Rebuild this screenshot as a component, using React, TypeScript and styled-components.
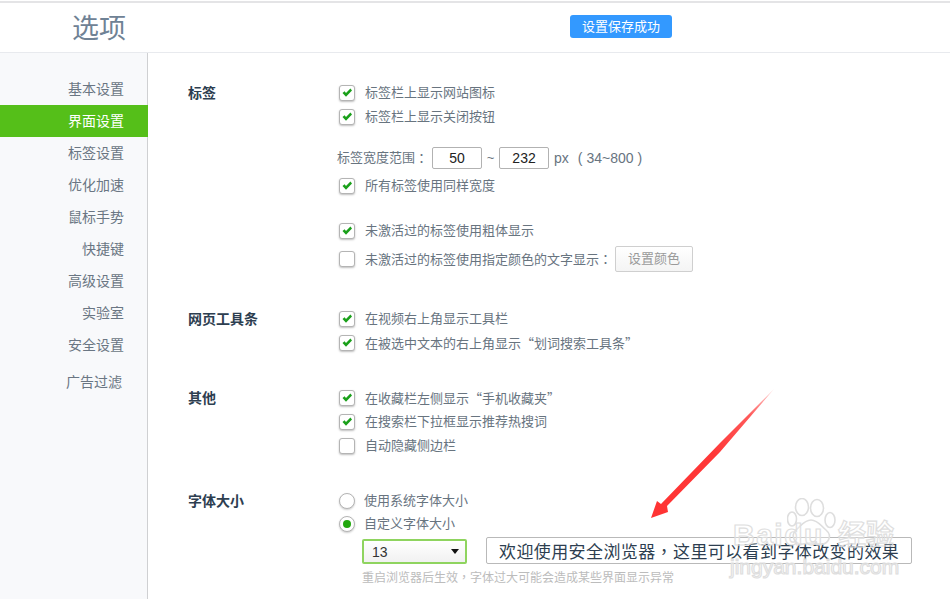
import styled, { createGlobalStyle } from 'styled-components'

const sideItems = ['基本设置', '界面设置', '标签设置', '优化加速', '鼠标手势', '快捷键', '高级设置', '实验室', '安全设置']

const Global = createGlobalStyle`
	html, body {
		margin: 0;
		padding: 0;
		background: #fff;
	}
	body {
		font-family: "Liberation Sans", "Noto Sans CJK SC", sans-serif;
		font-size: 13px;
		color: #68747f;
	}
`

const Page = styled.div`
	position: relative;
	width: 950px;
	height: 599px;
	overflow: hidden;
	padding-top: 1px;
	box-sizing: border-box;
	display: flex;
	flex-direction: column;
`

const Header = styled.header`
	height: 49px;
	flex: none;
	border-top: 2px solid #e4e4e6;
	border-bottom: 1px solid #e8eaee;
	padding-left: 72px;
	display: flex;
	align-items: center;
`

const Title = styled.h1`
	margin: 2px 0 0;
	font-size: 27px;
	font-weight: 400;
	line-height: 50px;
	color: #6f8295;
`

const Toast = styled.div`
	position: absolute;
	left: 570px;
	top: 15px;
	width: 102px;
	height: 23px;
	border-radius: 3px;
	background: #3399ff;
	color: #fff;
	font-size: 13px;
	line-height: 23px;
	text-align: center;
`

const Body = styled.div`
	flex: 1;
	display: flex;
	min-height: 0;
`

const Sidebar = styled.nav`
	flex: none;
	box-sizing: border-box;
	width: 148px;
	padding-top: 20px;
	background: #f8f9fb;
	border-right: 1px solid #cfd0d2;
`

const SideItem = styled.div<{ $active?: boolean }>`
	height: 32px;
	margin-right: -1px;
	padding-right: 24px;
	line-height: 32px;
	text-align: right;
	font-size: 14px;
	color: ${({ $active }) => ($active ? '#fff' : '#6a7683')};
	background: ${({ $active }) => ($active ? '#55bf19' : 'transparent')};
`

const AdItem = styled(SideItem)`
	margin-top: 5px;
	padding-right: 26px;
`

const Main = styled.main`
	flex: 1;
	padding: 28px 0 0 40px;
`

const Section = styled.section<{ $gap?: number }>`
	display: flex;
	margin-top: ${({ $gap }) => $gap ?? 0}px;
`

const SectionLabel = styled.div`
	width: 150px;
	flex: none;
	font-size: 14px;
	font-weight: 700;
	line-height: 24px;
	color: #2d3e50;
`

const Options = styled.div`
	flex: 1;
	display: flex;
	flex-direction: column;
`

const Row = styled.div<{ $top?: number }>`
	display: flex;
	align-items: center;
	height: 24px;
	margin-top: ${({ $top }) => $top ?? 0}px;
	padding-left: 1px;
	line-height: 24px;
`

const Check = styled.span<{ $on?: boolean }>`
	width: 16px;
	height: 16px;
	flex: none;
	box-sizing: border-box;
	margin-right: 10px;
	border: 1px solid #b4b4b4;
	border-radius: 3px;
	background: #fff;
	box-shadow: 0 1px 2px rgba(0, 0, 0, 0.25);
	display: flex;
	align-items: center;
	justify-content: center;
	svg {
		display: ${({ $on }) => ($on ? 'block' : 'none')};
	}
`

const Radio = styled.span<{ $on?: boolean }>`
	width: 16px;
	height: 16px;
	flex: none;
	box-sizing: border-box;
	margin-right: 9px;
	border: 1px solid #b4b4b4;
	border-radius: 50%;
	background: #fff;
	box-shadow: 0 1px 2px rgba(0, 0, 0, 0.2);
	display: flex;
	align-items: center;
	justify-content: center;
	&::after {
		content: '';
		width: 8px;
		height: 8px;
		border-radius: 50%;
		background: ${({ $on }) => ($on ? '#22a80e' : 'transparent')};
	}
`

const RangeRow = styled(Row)`
	padding-left: 0;
	margin-left: -1px;
`

const NumBox = styled.span`
	width: 50px;
	height: 22px;
	box-sizing: border-box;
	border: 1px solid #b2b2b2;
	border-radius: 2px;
	text-align: center;
	font-size: 14px;
	line-height: 20px;
	color: #222;
`

const FirstNum = styled(NumBox)`
	margin-left: 4px;
`

const Tilde = styled.span`
	width: 17px;
	text-align: center;
`

const Unit = styled.span`
	margin-left: 5px;
	font-size: 14px;
`

const Limits = styled.span`
	margin-left: 9px;
	font-size: 14px;
	white-space: pre;
`

// centred full-width punctuation, as the TC cut draws it
const Punct = styled.span`
	font-family: "Noto Sans CJK TC", sans-serif;
`

// the SC cut keeps curly quotes at full width
const Quote = styled.span`
	font-family: "Noto Sans CJK SC", sans-serif;
`

const ColorButton = styled.span`
	width: 78px;
	height: 26px;
	box-sizing: border-box;
	margin-left: 3px;
	border: 1px solid #cfcfcf;
	border-radius: 2px;
	background: linear-gradient(#fff, #f4f4f4);
	text-align: center;
	font-size: 13px;
	line-height: 24px;
	color: #9a9a9a;
`

const PreviewRow = styled.div`
	display: flex;
	align-items: flex-end;
	height: 27px;
	margin: 1px 0 0 24px;
`

const SelectBox = styled.div`
	width: 105px;
	height: 25px;
	box-sizing: border-box;
	padding: 0 6px 0 8px;
	border: 2px solid #8fd45f;
	border-radius: 2px;
	background: linear-gradient(#fff, #f1f1f1);
	display: flex;
	align-items: center;
	justify-content: space-between;
	font-size: 14px;
	color: #333;
`

const Caret = styled.span`
	border-left: 4.5px solid transparent;
	border-right: 4.5px solid transparent;
	border-top: 5px solid #111;
`

const PreviewBox = styled.div`
	width: 426px;
	height: 27px;
	box-sizing: border-box;
	margin-left: 19px;
	padding-left: 12px;
	border: 1px solid #b9b9b9;
	border-radius: 2px;
	font-size: 17px;
	letter-spacing: 0.4px;
	line-height: 25px;
	color: #2d3e50;
	white-space: nowrap;
`

const Note = styled.div`
	margin: 3px 0 0 24px;
	font-size: 12px;
	line-height: 20px;
	color: #bcbcbc;
`

const Overlay = styled.svg`
	position: absolute;
	left: 0;
	top: 0;
	pointer-events: none;
`

const Watermark = styled.div`
	position: absolute;
	left: 728px;
	top: 496px;
	width: 172px;
	height: 84px;
	pointer-events: none;
	color: rgba(255, 255, 255, 0.3);
	-webkit-text-stroke: 1.2px #dedede;
	white-space: nowrap;
`

const MarkBrand = styled.span`
	position: absolute;
	left: 5px;
	top: 21px;
	font-size: 30px;
	font-weight: 700;
	line-height: 36px;
	letter-spacing: 1.5px;
`

const MarkWord = styled.span`
	position: absolute;
	left: 110px;
	top: 25px;
	font-size: 28px;
	font-weight: 700;
	line-height: 30px;
`

const MarkSite = styled.span`
	position: absolute;
	left: 2px;
	top: 56px;
	font-size: 21px;
	line-height: 30px;
`

const Paw = styled.svg`
	position: absolute;
	left: 59px;
	top: 2px;
`

const Tick = () => (
	<svg width="12" height="12" viewBox="0 0 12 12">
		<path d="M1.5 6 L3.6 4.2 L5 6 L9.4 1.6 L11 3.4 L5 9.8 Z" fill="#1aa01a" />
	</svg>
)

const CheckRow = ({ on = true, top, children }: { on?: boolean; top?: number; children: React.ReactNode }) => (
	<Row $top={top}>
		<Check $on={on}>
			<Tick />
		</Check>
		{children}
	</Row>
)

export default function App() {
	return (
		<Page>
			<Global />
			<Header>
				<Title>选项</Title>
			</Header>
			<Toast>设置保存成功</Toast>
			<Body>
				<Sidebar>
					{sideItems.map((item) => (
						<SideItem key={item} $active={item === '界面设置'}>
							{item}
						</SideItem>
					))}
					<AdItem>广告过滤</AdItem>
				</Sidebar>
				<Main>
					<Section>
						<SectionLabel>标签</SectionLabel>
						<Options>
							<CheckRow>标签栏上显示网站图标</CheckRow>
							<CheckRow>标签栏上显示关闭按钮</CheckRow>
							<RangeRow $top={17}>
								标签宽度范围<Punct>：</Punct>
								<FirstNum>50</FirstNum>
								<Tilde>~</Tilde>
								<NumBox>232</NumBox>
								<Unit>px</Unit>
								<Limits>( 34~800 )</Limits>
							</RangeRow>
							<CheckRow top={4}>所有标签使用同样宽度</CheckRow>
							<CheckRow top={21}>未激活过的标签使用粗体显示</CheckRow>
							<CheckRow on={false} top={4}>
								<span>
									未激活过的标签使用指定颜色的文字显示<Punct>：</Punct>
								</span>
								<ColorButton>设置颜色</ColorButton>
							</CheckRow>
						</Options>
					</Section>
					<Section $gap={36}>
						<SectionLabel>网页工具条</SectionLabel>
						<Options>
							<CheckRow>在视频右上角显示工具栏</CheckRow>
							<CheckRow>
								<span>
									在被选中文本的右上角显示<Quote>“</Quote>划词搜索工具条<Quote>”</Quote>
								</span>
							</CheckRow>
						</Options>
					</Section>
					<Section $gap={31}>
						<SectionLabel>其他</SectionLabel>
						<Options>
							<CheckRow>
								<span>
									在收藏栏左侧显示<Quote>“</Quote>手机收藏夹<Quote>”</Quote>
								</span>
							</CheckRow>
							<CheckRow>在搜索栏下拉框显示推荐热搜词</CheckRow>
							<CheckRow on={false}>自动隐藏侧边栏</CheckRow>
						</Options>
					</Section>
					<Section $gap={31}>
						<SectionLabel>字体大小</SectionLabel>
						<Options>
							<Row>
								<Radio />
								使用系统字体大小
							</Row>
							<Row $top={-1}>
								<Radio $on />
								自定义字体大小
							</Row>
							<PreviewRow>
								<SelectBox>
									13
									<Caret />
								</SelectBox>
								<PreviewBox>
									欢迎使用安全浏览器<Punct>，</Punct>这里可以看到字体改变的效果
								</PreviewBox>
							</PreviewRow>
							<Note>
								重启浏览器后生效<Punct>，</Punct>字体过大可能会造成某些界面显示异常
							</Note>
						</Options>
					</Section>
				</Main>
			</Body>
			<Overlay width="950" height="599" viewBox="0 0 950 599">
				<defs>
					<linearGradient id="arrowFade" x1="774" y1="389" x2="651" y2="518" gradientUnits="userSpaceOnUse">
						<stop offset="0" stopColor="#ffd4d4" />
						<stop offset="0.2" stopColor="#ff5a5a" />
						<stop offset="0.5" stopColor="#ff3838" />
						<stop offset="1" stopColor="#ff3333" />
					</linearGradient>
				</defs>
				<path d="M774 389 L720 443 L661 504 L657 501 L651 518 L668 512 L667 506 L720 452 Z" fill="url(#arrowFade)" />
			</Overlay>
			<Watermark>
				<Paw width="50" height="50" viewBox="0 0 50 50">
					<g fill="rgba(255,255,255,0.3)" stroke="#dedede" strokeWidth="1.6">
						<ellipse cx="5" cy="21" rx="4.5" ry="7" />
						<ellipse cx="15" cy="9" rx="6.5" ry="8.5" />
						<ellipse cx="30" cy="10" rx="6.5" ry="8.5" />
						<ellipse cx="43" cy="22" rx="5" ry="7.5" />
						<path d="M24 22 C31 22 34 28 39 32 C46 38 41 47 33 46 C28 45 21 45 16 46 C8 47 3 38 9 32 C14 28 17 22 24 22 Z" />
					</g>
				</Paw>
				<MarkBrand>Baidu</MarkBrand>
				<MarkWord>经验</MarkWord>
				<MarkSite>jingyan.baidu.com</MarkSite>
			</Watermark>
		</Page>
	)
}
